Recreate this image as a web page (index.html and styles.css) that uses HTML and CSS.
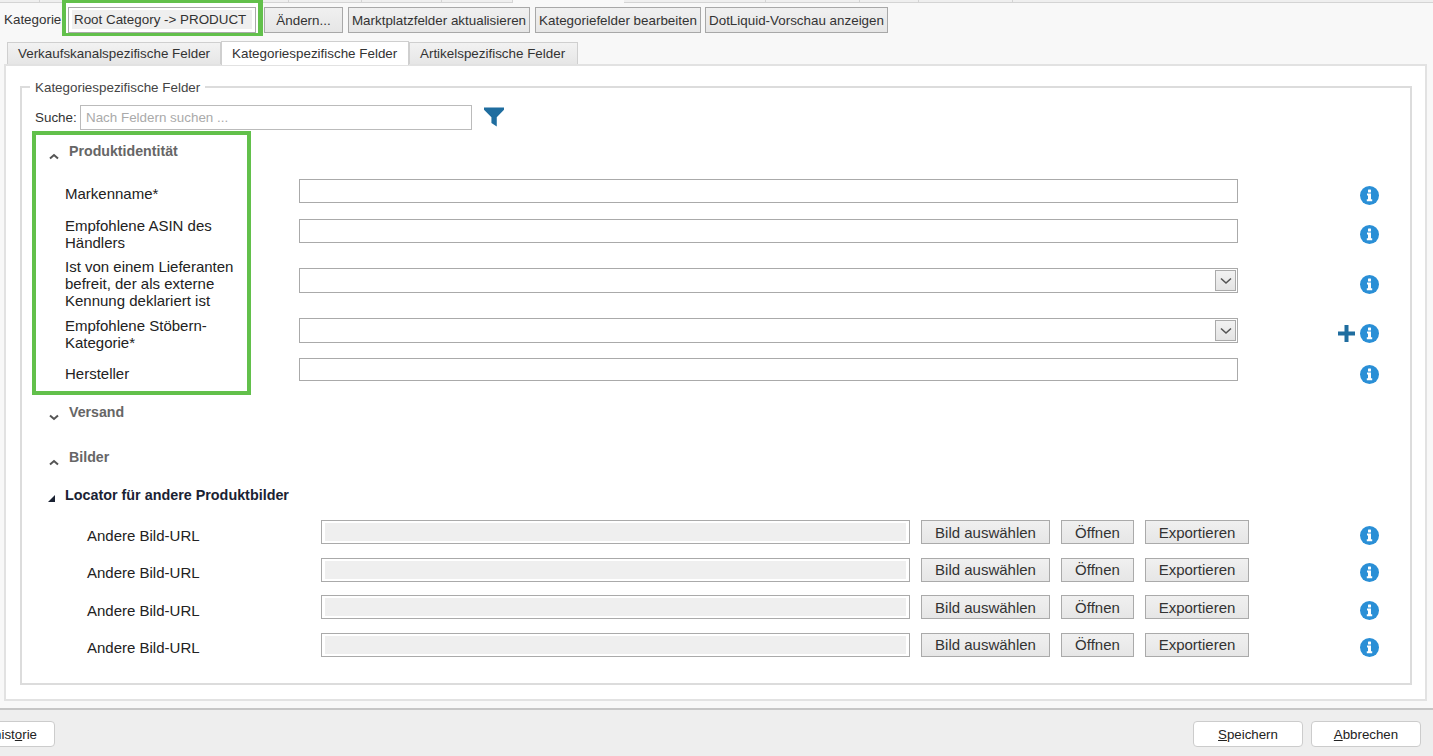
FILE: index.html
```html
<!DOCTYPE html>
<html lang="de">
<head>
<meta charset="utf-8">
<title>Kategoriespezifische Felder</title>
<link rel="stylesheet" href="styles.css">
</head>
<body>
<svg class="defs" width="0" height="0" aria-hidden="true">
  <symbol id="info" viewBox="0 0 19 19">
    <circle cx="9.5" cy="9.5" r="9.5" fill="#2a8fd6"/>
    <rect x="8" y="3.6" width="3" height="2.8" rx="0.5" fill="#fff"/>
    <path d="M7 7.6h4v5.6h1.2v2H6.8v-2H8V9.6H7z" fill="#fff"/>
  </symbol>
  <symbol id="chev-up" viewBox="0 0 10 7">
    <path d="M1 5.6 5 2l4 3.6" fill="none" stroke="#555" stroke-width="2"/>
  </symbol>
  <symbol id="chev-down" viewBox="0 0 10 7">
    <path d="M1 1.4 5 5l4-3.6" fill="none" stroke="#555" stroke-width="2"/>
  </symbol>
</svg>

<div class="strip">
  <span class="strip-tab w40"></span><span class="strip-tab w249"></span><span class="strip-tab w73"></span><span class="strip-tab w80"></span><span class="strip-tab w71"></span><span class="strip-active"></span><span class="strip-tab w142"></span><span class="strip-tab w94"></span><span class="strip-tab w59"></span><span class="strip-tab w94"></span><span class="strip-rest"></span>
</div>

<div class="toolbar">
  <span class="tb-label">Kategorie</span>
  <div class="green-wrap"><div class="cat-input"><span class="cat-fill">Root Category -&gt; PRODUCT</span></div></div>
  <button class="btn b-aendern">Ändern...</button>
  <button class="btn b-markt">Marktplatzfelder aktualisieren</button>
  <button class="btn b-kat">Kategoriefelder bearbeiten</button>
  <button class="btn b-dot">DotLiquid-Vorschau anzeigen</button>
</div>

<div class="tabs">
  <div class="tab t1">Verkaufskanalspezifische Felder</div>
  <div class="tab tab-active t2">Kategoriespezifische Felder</div>
  <div class="tab t3">Artikelspezifische Felder</div>
</div>

<main class="panel">
  <section class="fs">
    <span class="legend">Kategoriespezifische Felder</span>
    <div class="green-overlay"></div>

    <div class="search">
      <span class="search-label">Suche:</span>
      <div class="search-input">Nach Feldern suchen ...</div>
      <svg class="filter" width="20" height="20" viewBox="0 0 21 20"><path d="M0 0h21v2.4l-7.6 7.8V20l-5.6-3.6v-6.2L0 2.4z" fill="#1f6d9f"/></svg>
    </div>

    <div class="head h-prod"><svg class="chev" width="10" height="7"><use href="#chev-up"/></svg><span>Produktidentität</span></div>

    <div class="row r1">
      <label class="lab">Markenname*</label>
      <div class="ctl"></div>
      <div class="icons"><svg class="info" width="19" height="19"><use href="#info"/></svg></div>
    </div>
    <div class="row r2">
      <label class="lab">Empfohlene ASIN des Händlers</label>
      <div class="ctl"></div>
      <div class="icons"><svg class="info" width="19" height="19"><use href="#info"/></svg></div>
    </div>
    <div class="row r3">
      <label class="lab">Ist von einem Lieferanten befreit, der als externe Kennung deklariert ist</label>
      <div class="ctl ctl-select"><span class="drop"><svg width="12" height="8" viewBox="0 0 12 8"><path d="M1 1.5 6 6l5-4.500" fill="none" stroke="#555" stroke-width="1.600"/></svg></span></div>
      <div class="icons"><svg class="info" width="19" height="19"><use href="#info"/></svg></div>
    </div>
    <div class="row r4">
      <label class="lab">Empfohlene Stöbern-Kategorie*</label>
      <div class="ctl ctl-select"><span class="drop"><svg width="12" height="8" viewBox="0 0 12 8"><path d="M1 1.5 6 6l5-4.500" fill="none" stroke="#555" stroke-width="1.600"/></svg></span></div>
      <div class="icons"><svg class="plus" width="17" height="17" viewBox="0 0 17 17"><path d="M6.500 0h4v6.500H17v4h-6.500V17h-4v-6.500H0v-4h6.500z" fill="#1f6d9f"/></svg><svg class="info" width="19" height="19"><use href="#info"/></svg></div>
    </div>
    <div class="row r5">
      <label class="lab">Hersteller</label>
      <div class="ctl"></div>
      <div class="icons"><svg class="info" width="19" height="19"><use href="#info"/></svg></div>
    </div>

    <div class="head h-vers"><svg class="chev" width="10" height="7"><use href="#chev-down"/></svg><span>Versand</span></div>
    <div class="head h-bild"><svg class="chev" width="10" height="7"><use href="#chev-up"/></svg><span>Bilder</span></div>
    <div class="subhead"><svg class="tri" width="7" height="7" viewBox="0 0 7 7"><path d="M7 0v7H0z" fill="#1a2233"/></svg><span>Locator für andere Produktbilder</span></div>

    <div class="images">
      <div class="img-row">
        <span class="lab">Andere Bild-URL</span>
        <div class="url"><span class="url-fill"></span></div>
        <button class="btn-lg bl1">Bild auswählen</button>
        <button class="btn-lg bl2">Öffnen</button>
        <button class="btn-lg bl3">Exportieren</button>
        <div class="icons"><svg class="info" width="19" height="19"><use href="#info"/></svg></div>
      </div>
      <div class="img-row">
        <span class="lab">Andere Bild-URL</span>
        <div class="url"><span class="url-fill"></span></div>
        <button class="btn-lg bl1">Bild auswählen</button>
        <button class="btn-lg bl2">Öffnen</button>
        <button class="btn-lg bl3">Exportieren</button>
        <div class="icons"><svg class="info" width="19" height="19"><use href="#info"/></svg></div>
      </div>
      <div class="img-row">
        <span class="lab">Andere Bild-URL</span>
        <div class="url"><span class="url-fill"></span></div>
        <button class="btn-lg bl1">Bild auswählen</button>
        <button class="btn-lg bl2">Öffnen</button>
        <button class="btn-lg bl3">Exportieren</button>
        <div class="icons"><svg class="info" width="19" height="19"><use href="#info"/></svg></div>
      </div>
      <div class="img-row">
        <span class="lab">Andere Bild-URL</span>
        <div class="url"><span class="url-fill"></span></div>
        <button class="btn-lg bl1">Bild auswählen</button>
        <button class="btn-lg bl2">Öffnen</button>
        <button class="btn-lg bl3">Exportieren</button>
        <div class="icons"><svg class="info" width="19" height="19"><use href="#info"/></svg></div>
      </div>
    </div>
  </section>
</main>

<footer class="footer">
  <button class="fbtn f-hist">hist<u>o</u>rie</button>
  <span class="f-space"></span>
  <button class="fbtn f-save"><u>S</u>peichern</button>
  <button class="fbtn f-cancel"><u>A</u>bbrechen</button>
</footer>
</body>
</html>
```

FILE: styles.css
```css
* { box-sizing: border-box; }

html, body { height: 100%; }

body {
  margin: 0;
  height: 756px;
  overflow: hidden;
  display: flex;
  flex-direction: column;
  background: #f8f8f8;
  font-family: "Liberation Sans", Arial, sans-serif;
  font-size: 13.4px;
  color: #333;
}

.defs { display: block; height: 0; }

button { font-family: inherit; margin: 0; padding: 0; cursor: default; }

/* remains of the outer tab strip */
.strip { display: flex; height: 3px; flex: none; }
.strip-tab { background: #efefef; border-right: 1px solid #d4d4d4; border-bottom: 1px solid #d4d4d4; }
.strip-active { width: 111px; background: #f8f8f8; }
.strip-rest { flex: 1; background: #efefef; border-bottom: 1px solid #d4d4d4; }
.w40 { width: 40px; } .w249 { width: 249px; } .w73 { width: 73px; } .w80 { width: 80px; }
.w71 { width: 71px; } .w142 { width: 142px; } .w94 { width: 94px; } .w59 { width: 59px; }

/* toolbar */
.toolbar {
  flex: none;
  display: flex;
  height: 36px;
  margin-top: -3px;
  padding-left: 4px;
  position: relative;
}
.tb-label { width: 58px; padding-top: 12px; line-height: 15px; white-space: nowrap; }

.green-wrap {
  width: 201px;
  height: 36px;
  border: solid #62c04b;
  border-width: 3px 5px 3px 4px;
  padding: 4px 2px 0;
  background: #fff;
}
.cat-input {
  width: 188px;
  height: 26px;
  border: 1px solid #aaa;
  padding: 2px 3px;
  background: #fff;
}
.cat-fill {
  display: block;
  height: 19px;
  padding-left: 2px;
  background: #efefef;
  line-height: 19px;
  white-space: nowrap;
}

.btn {
  height: 26px;
  margin-top: 7px;
  border: 1px solid #a8a8a8;
  background: linear-gradient(#f0f0f0, #e6e6e6);
  color: #333;
  font-size: 13.4px;
  white-space: nowrap;
}
.b-aendern { width: 79px; margin-left: 1px; }
.b-markt { width: 182px; margin-left: 5px; }
.b-kat { width: 166px; margin-left: 5px; }
.b-dot { width: 183px; margin-left: 4px; }

/* tabs */
.tabs { flex: none; display: flex; height: 23px; margin-top: 5px; padding-left: 7px; }
.tab {
  height: 22px;
  margin-top: 1px;
  border: 1px solid #cfcfcf;
  border-bottom: 0;
  background: linear-gradient(#f2f2f2, #e6e6e6);
  line-height: 22px;
  padding-left: 10px;
  white-space: nowrap;
}
.tab-active { height: 24px; margin-top: 0; position: relative; z-index: 1; background: #fff; line-height: 23px; }
.t1 { width: 214px; }
.t2 { width: 188px; }
.t3 { width: 169px; }

/* main panel */
.panel {
  flex: none;
  width: 1423px;
  height: 637px;
  margin-left: 4px;
  border: 2px solid #e2e2e2;
  padding: 20px 13px 0 14px;
  background: #fff;
}

.fs {
  position: relative;
  height: 599px;
  border: 2px solid #dcdcdc;
  padding: 17px 31px 0 13px;
}

.legend {
  position: absolute;
  left: 8px;
  top: -8px;
  padding: 0 5px;
  background: #fff;
  line-height: 15px;
  color: #444;
  white-space: nowrap;
}

.green-overlay {
  position: absolute;
  left: 10px;
  top: 43px;
  width: 219px;
  height: 264px;
  border: 4px solid #62c04b;
}

/* search */
.search { display: flex; align-items: center; height: 24px; }
.search-label { width: 45px; color: #333; }
.search-input {
  width: 392px;
  height: 25px;
  border: 1px solid #bbb;
  padding-left: 5px;
  line-height: 23px;
  color: #aaa;
}
.filter { margin-left: 12px; }

/* section headers */
.head {
  display: flex;
  height: 24px;
  align-items: center;
  padding-left: 14px;
  font-size: 14.2px;
  font-weight: bold;
  color: #666;
}
.head .chev { margin: 10px 10px 0 0; }
.h-prod { margin-top: 10px; margin-bottom: 16px; }
.h-vers { margin-top: 11px; }
.h-bild { margin-top: 21px; }

.subhead {
  display: flex;
  align-items: center;
  height: 24px;
  margin-top: 14px;
  padding-left: 13px;
  font-size: 14.35px;
  font-weight: bold;
  color: #1a2233;
}
.tri { margin: 6px 10px 0 0; }

/* form rows */
.lab {
  color: #222;
  font-size: 15px;
  line-height: 17px;
}
.row {
  display: grid;
  grid-template-columns: 234px 939px 1fr;
  align-items: center;
  padding-left: 30px;
}
.row .lab { width: 175px; margin-bottom: 2px; }
.ctl {
  position: relative;
  height: 24px;
  border: 1px solid #aaa;
  margin-bottom: 8px;
  background: #fff;
}
.ctl-select { height: 25px; padding: 1px 1px 1px 0; display: flex; justify-content: flex-end; }
.drop {
  width: 21px;
  height: 21px;
  border: 1px solid #aaa;
  background: linear-gradient(#f2f2f2, #e4e4e4);
  display: flex;
  align-items: center;
  justify-content: center;
}
.icons { display: flex; justify-content: flex-end; align-items: center; gap: 5px; }
.info, .plus { display: block; }

.row.r1 .lab, .row.r5 .lab { margin-bottom: 0; }
.r1 .ctl { margin-bottom: 4px; }
.r1 .icons { margin-top: 4px; }
.r2 { margin-top: 10px; }
.r2 .icons { margin-bottom: 2px; }
.r3 { margin-top: 5px; }
.r3 .icons { margin-bottom: 1px; }
.r4 { margin-top: 6px; }
.r4 .ctl { margin-bottom: 9px; }
.r4 .icons { margin-bottom: 4px; }
.r5 { margin-top: 5px; }
.r5 .ctl { height: 23px; }
.r5 .icons { margin-top: 1px; }

/* image rows */
.images { display: flex; flex-direction: column; gap: 7.67px; margin-top: 13px; }
.img-row {
  display: flex;
  align-items: center;
  height: 30px;
  padding-left: 52px;
}
.img-row .lab { width: 234px; flex: none; }
.url {
  width: 589px;
  height: 24px;
  flex: none;
  margin-bottom: 6px;
  border: 1px solid #aaa;
  padding: 2px 3px;
}
.url-fill { display: block; height: 18px; background: #efefef; }
.btn-lg {
  height: 24px;
  flex: none;
  margin: 0 0 6px 11px;
  border: 1px solid #aaa;
  background: linear-gradient(#f0f0f0, #e6e6e6);
  color: #333;
  font-size: 15px;
  white-space: nowrap;
}
.bl1 { width: 129px; }
.bl2 { width: 73px; }
.bl3 { width: 104px; }
.img-row .icons { flex: 1; }

/* footer */
.footer {
  flex: 1;
  display: flex;
  margin-top: 7px;
  border-top: 2px solid #c6c6c6;
  padding: 11px 12px 0 0;
  background: #eee;
}
.fbtn {
  width: 110px;
  height: 26px;
  border: 1px solid #ccc;
  border-radius: 4px;
  background: #fff;
  color: #222;
  font-size: 13.3px;
}
.f-hist { width: 75px; margin-left: -20px; padding-right: 17px; text-align: right; }
.f-space { flex: 1; }
.f-save { margin-right: 8px; }
```
